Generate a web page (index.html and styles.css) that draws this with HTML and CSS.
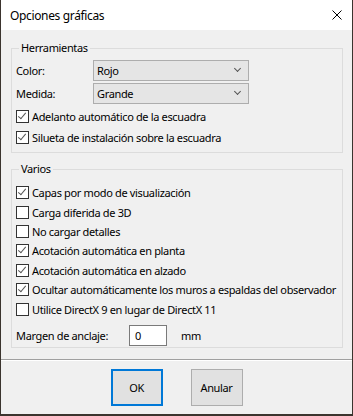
FILE: index.html
```html
<!DOCTYPE html>
<html lang="es">
<head>
    <meta charset="UTF-8">
    <title>Opciones gráficas</title>
    <link rel="stylesheet" href="styles.css">
</head>
<body>
    <div class="window">
        <div class="titlebar">
            <span class="title">Opciones gráficas</span>
            <svg class="close" width="10" height="10" viewBox="0 0 10 10">
                <path d="M0.5 0.5 L9.5 9.5 M9.5 0.5 L0.5 9.5" stroke="#000" stroke-width="1"/>
            </svg>
        </div>

        <div class="content">
            <fieldset class="group tools">
                <legend>Herramientas</legend>
                <div class="field">
                    <span class="label">Color:</span>
                    <div class="combo">Rojo<span class="chevron"></span></div>
                </div>
                <div class="field second">
                    <span class="label">Medida:</span>
                    <div class="combo">Grande<span class="chevron"></span></div>
                </div>
                <div class="checks">
                    <div class="check"><span class="box on"></span>Adelanto automático de la escuadra</div>
                    <div class="check"><span class="box on"></span>Silueta de instalación sobre la escuadra</div>
                </div>
            </fieldset>

            <fieldset class="group misc">
                <legend>Varios</legend>
                <div class="checks">
                    <div class="check row"><span class="box on"></span>Capas por modo de visualización</div>
                    <div class="check row"><span class="box"></span>Carga diferida de 3D</div>
                    <div class="check row"><span class="box"></span>No cargar detalles</div>
                    <div class="check row"><span class="box on"></span>Acotación automática en planta</div>
                    <div class="check row"><span class="box on"></span>Acotación automática en alzado</div>
                    <div class="check row"><span class="box on"></span>Ocultar automáticamente los muros a espaldas del observador</div>
                    <div class="check row"><span class="box"></span>Utilice DirectX 9 en lugar de DirectX 11</div>
                </div>
                <div class="margin-row">
                    <span class="label wide">Margen de anclaje:</span>
                    <div class="input">0</div>
                    <span class="unit">mm</span>
                </div>
            </fieldset>
        </div>

        <div class="footer">
            <button class="btn default">OK</button>
            <button class="btn">Anular</button>
        </div>
    </div>
</body>
</html>
```

FILE: styles.css
```css
html, body {
    margin: 0;
    padding: 0;
}
body {
    background-color: #3b342e;
    width: 353px;
    height: 416px;
    font-family: "Noto Sans", "Liberation Sans", sans-serif;
    font-size: 11px;
    letter-spacing: -0.35px;
    color: #000;
}
.window {
    margin-left: 1px;
    width: 351px;
    height: 414px;
    background-color: #f0f0f0;
    display: flex;
    flex-direction: column;
}
.titlebar {
    height: 30px;
    background-color: #fff;
    display: flex;
    align-items: center;
    justify-content: space-between;
    padding: 0 10px 0 9px;
    flex-shrink: 0;
}
.title {
    font-size: 12px;
    line-height: 15px;
}
.close {
    display: block;
}
.content {
    padding: 11px 9px 0 10px;
    flex: 1;
}
.group {
    margin: 0;
    padding: 0 4px;
    border: 1px solid #dcdcdc;
    min-width: 0;
}
.group legend {
    padding: 0 2px;
    margin-left: 3px;
    line-height: 14px;
}
.tools {
    padding-bottom: 4px;
}
.misc {
    margin-top: 9px;
    padding-bottom: 1px;
}
.field {
    display: flex;
    align-items: center;
    margin-top: 5px;
    height: 21px;
}
.field.second {
    margin-top: 2px;
}
.label {
    width: 77px;
    flex-shrink: 0;
}
.label.wide {
    width: 113px;
}
.combo {
    position: relative;
    box-sizing: border-box;
    width: 156px;
    height: 21px;
    border: 1px solid #adadad;
    background-color: #e5e5e5;
    padding-left: 3px;
    line-height: 19px;
}
.chevron {
    position: absolute;
    right: 8px;
    top: 5px;
    width: 4px;
    height: 4px;
    border-right: 1px solid #555;
    border-bottom: 1px solid #555;
    transform: rotate(45deg);
}
.checks {
    margin-top: 2px;
}
.check {
    display: flex;
    align-items: center;
    height: 21px;
    white-space: nowrap;
}
.check.row {
    height: 19.4px;
}
.misc .checks {
    margin-top: 7px;
}
.box {
    position: relative;
    box-sizing: border-box;
    width: 13px;
    height: 13px;
    border: 1px solid #333;
    background-color: #fff;
    margin-right: 3px;
    flex-shrink: 0;
}
.box.on::after {
    content: "";
    position: absolute;
    left: 3px;
    top: 0;
    width: 3px;
    height: 7px;
    border-right: 1px solid #555;
    border-bottom: 1px solid #555;
    transform: rotate(40deg);
}
.margin-row {
    display: flex;
    align-items: center;
    height: 21px;
    margin-top: 6px;
}
.input {
    box-sizing: border-box;
    width: 38px;
    height: 21px;
    border: 1px solid #7a7a7a;
    background-color: #fff;
    padding-left: 5px;
    line-height: 19px;
}
.unit {
    margin-left: 14px;
}
.footer {
    height: 55px;
    flex-shrink: 0;
    border-top: 1px solid #a0a0a0;
    box-shadow: inset 0 1px 0 #fff;
    display: flex;
    justify-content: center;
    align-items: flex-start;
    gap: 28px;
    padding-top: 9px;
    box-sizing: border-box;
}
.btn {
    box-sizing: border-box;
    width: 52px;
    height: 37px;
    border: 1px solid #adadad;
    background-color: #e1e1e1;
    font-family: "Noto Sans", "Liberation Sans", sans-serif;
    font-size: 11px;
    letter-spacing: -0.35px;
    color: #000;
    padding: 0;
}
.btn.default {
    border: 2px solid #0078d7;
}
```
